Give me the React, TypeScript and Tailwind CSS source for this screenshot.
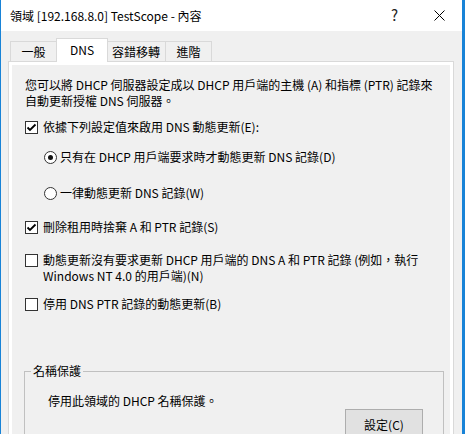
import React from "react";

const font = { fontFamily: '"Noto Sans CJK TC", "Noto Sans", sans-serif' };

function CheckBox({ checked }: { checked: boolean }) {
  return (
    <div className="w-[13px] h-[13px] border border-[#333333] bg-white flex items-center justify-center shrink-0">
      {checked && (
        <svg width="11" height="11" viewBox="0 0 11 11">
          <path d="M1.5 5.5 L4 8 L9.5 2.5" fill="none" stroke="#000" strokeWidth="1.8" />
        </svg>
      )}
    </div>
  );
}

function Radio({ checked }: { checked: boolean }) {
  return (
    <div className="w-[13px] h-[13px] rounded-full border border-[#333333] bg-white flex items-center justify-center shrink-0">
      {checked && <div className="w-[5px] h-[5px] rounded-full bg-[#111]" />}
    </div>
  );
}

export default function App() {
  return (
    <div
      className="w-[465px] h-[434px] overflow-hidden flex flex-col border-l border-l-[#1883d7] border-r-[3px] border-r-[#1883d7] bg-[#f0f0f0] text-[12px] text-black"
      style={font}
    >
      {/* title bar */}
      <div className="h-[31px] bg-white flex items-center shrink-0">
        <div className="pl-[9px] flex-1 leading-[16px]">領域 [192.168.8.0] TestScope - 內容</div>
        <div className="w-[45px] h-full flex items-center justify-center text-[15px] text-[#222]">?</div>
        <div className="w-[45px] h-full flex items-center justify-center">
          <svg width="11" height="11" viewBox="0 0 11 11">
            <path d="M0.5 0.5 L10.5 10.5 M10.5 0.5 L0.5 10.5" stroke="#000" strokeWidth="1" />
          </svg>
        </div>
      </div>

      {/* tabs */}
      <div className="flex items-end pl-[9px] pt-[7px] shrink-0 relative z-10 -mb-px">
        <div className="h-[21px] w-[47px] border border-[#d9d9d9] border-b-0 flex items-center justify-center leading-[16px]">
          一般
        </div>
        <div className="h-[24px] w-[52px] -ml-px border border-[#d9d9d9] border-b-0 bg-white flex items-start pt-[3px] justify-center leading-[16px]">
          DNS
        </div>
        <div className="h-[21px] w-[59px] -ml-px border border-[#d9d9d9] border-b-0 border-l-0 flex items-center justify-center leading-[16px]">
          容錯移轉
        </div>
        <div className="h-[21px] w-[46px] border border-[#d9d9d9] border-b-0 border-l-0 flex items-center justify-center leading-[16px]">
          進階
        </div>
      </div>

      {/* panel */}
      <div className="ml-[7px] w-[446px] flex-1 border border-[#d9d9d9] bg-white p-[3px] flex flex-col">
        <div className="flex-1 bg-[#f0f0f0] flex flex-col pl-[13px] pt-[12px] leading-[16px]">
          <div>
            您可以將 DHCP 伺服器設定成以 DHCP 用戶端的主機 (A) 和指標 (PTR) 記錄來
            <br />
            自動更新授權 DNS 伺服器。
          </div>

          <div className="mt-[10px] flex items-start gap-[5px]">
            <div className="mt-[2px]"><CheckBox checked /></div>
            <div>依據下列設定值來啟用 DNS 動態更新(E):</div>
          </div>

          <div className="mt-[14px] ml-[19px] flex items-start gap-[3px]">
            <div className="mt-[2px]"><Radio checked /></div>
            <div>只有在 DHCP 用戶端要求時才動態更新 DNS 記錄(D)</div>
          </div>

          <div className="mt-[20px] ml-[19px] flex items-start gap-[3px]">
            <div className="mt-[2px]"><Radio checked={false} /></div>
            <div>一律動態更新 DNS 記錄(W)</div>
          </div>

          <div className="mt-[18px] flex items-start gap-[5px]">
            <div className="mt-[2px]"><CheckBox checked /></div>
            <div>刪除租用時捨棄 A 和 PTR 記錄(S)</div>
          </div>

          <div className="mt-[17px] flex items-start gap-[5px]">
            <div className="mt-[2px]"><CheckBox checked={false} /></div>
            <div>
              動態更新沒有要求更新 DHCP 用戶端的 DNS A 和 PTR 記錄 (例如，執行
              <br />
              Windows NT 4.0 的用戶端)(N)
            </div>
          </div>

          <div className="mt-[12px] flex items-start gap-[5px]">
            <div className="mt-[2px]"><CheckBox checked={false} /></div>
            <div>停用 DNS PTR 記錄的動態更新(B)</div>
          </div>

          {/* group box */}
          <div className="mt-[59px] -ml-[1px] w-[420px] flex-1 border border-[#c0c0c0] border-b-0 relative pl-[23px] pt-[21px]">
            <div className="absolute -top-[9px] left-[6px] px-[2px] bg-[#f0f0f0]">名稱保護</div>
            <div>停用此領域的 DHCP 名稱保護。</div>
            <div className="mt-0 ml-[297px] w-[78px] h-[32px] border border-[#adadad] bg-[#e1e1e1] flex items-center justify-center">
              設定(C)
            </div>
          </div>
        </div>
      </div>
    </div>
  );
}
